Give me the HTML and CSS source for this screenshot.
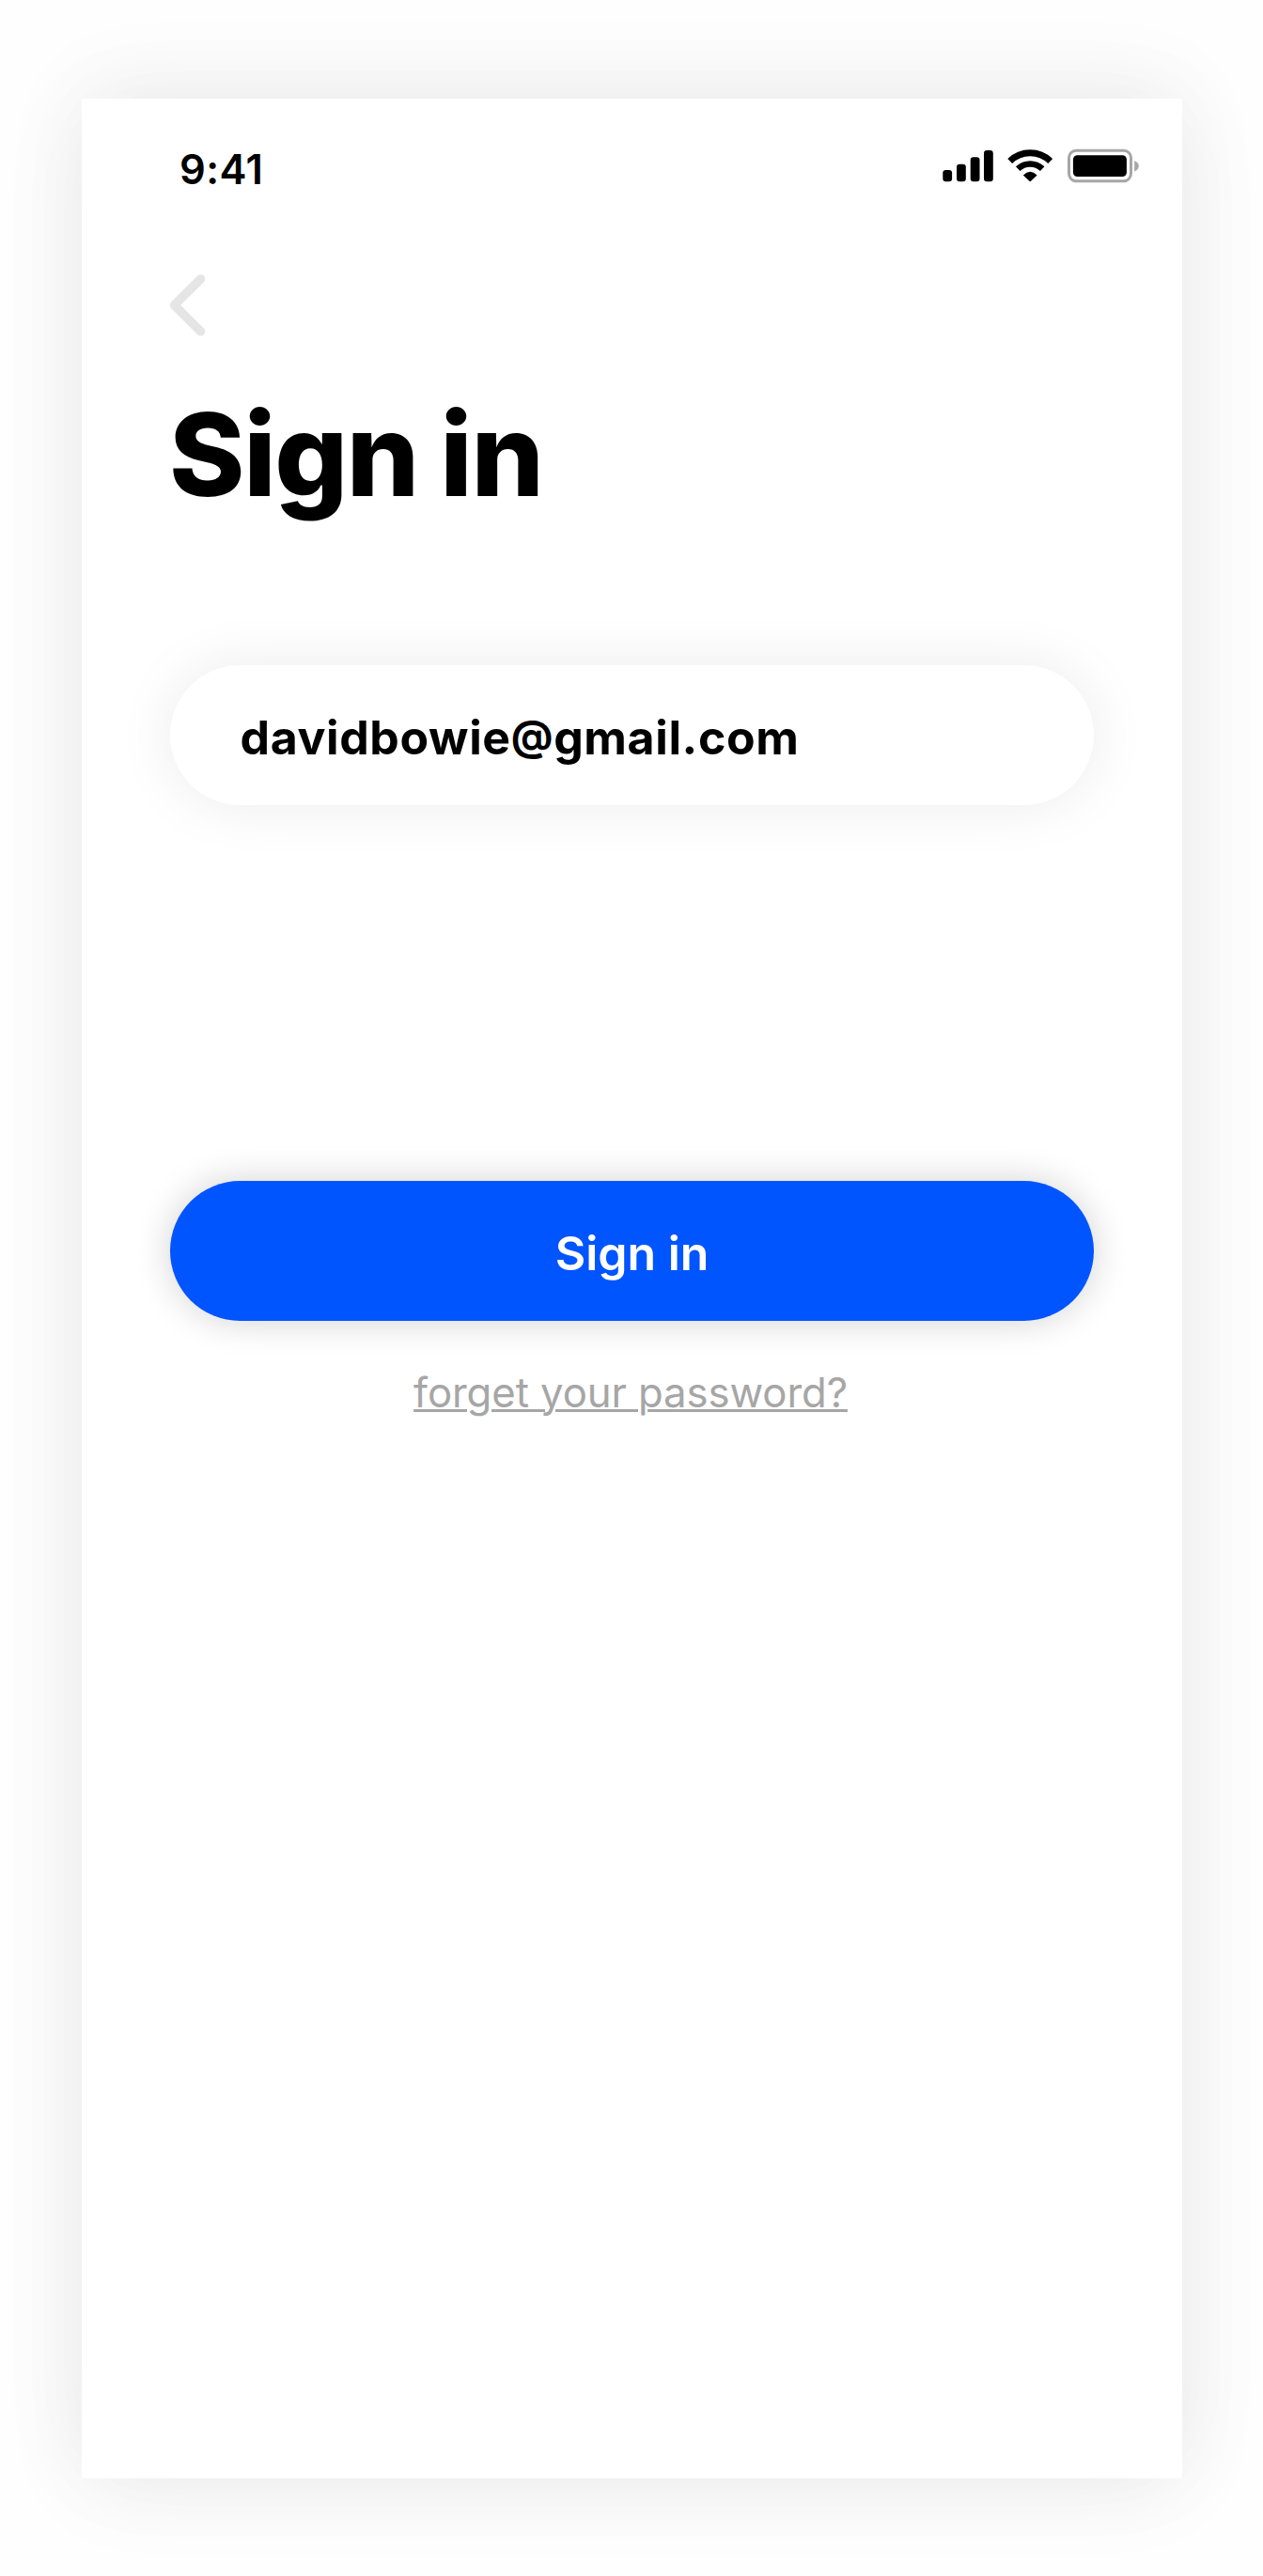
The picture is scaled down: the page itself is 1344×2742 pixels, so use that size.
FILE: index.html
```html
<!DOCTYPE html>
<html lang="en">
<head>
<meta charset="utf-8">
<title>Sign in</title>
<link rel="stylesheet" href="styles.css">
</head>
<body>
<main class="screen">
  <header class="status">
    <span class="time">9:41</span>
    <svg class="indicators" viewBox="0 0 210 40" width="210" height="40" aria-hidden="true">
      <g fill="#000">
        <rect x="0.3" y="23" width="9.8" height="12.3" rx="3.2"/>
        <rect x="15" y="16.7" width="9.8" height="18.6" rx="3.2"/>
        <rect x="29.7" y="9.3" width="9.8" height="26" rx="3.2"/>
        <rect x="44" y="2" width="9.8" height="33.3" rx="3.2"/>
      </g>
      <g fill="none" stroke="#000">
        <path d="M71.7 13.4A30.8 30.8 0 0 1 114.7 13.4" stroke-width="7"/>
        <path d="M80.2 21.6A19 19 0 0 1 106.2 21.6" stroke-width="6.6"/>
      </g>
      <path d="M85.8 28.4Q93.2 21.2 100.6 28.4L94 34.8Q93.2 35.6 92.4 34.8Z"/>
      <rect x="134.5" y="2.3" width="66" height="32.4" rx="7.6" fill="none" stroke="#a6a6a6" stroke-width="3"/>
      <rect x="138.9" y="7.2" width="57" height="22.8" rx="4.6"/>
      <path d="M204.2 12.9Q208.8 15 208.8 18.8T204.2 24.6Z" fill="#a6a6a6"/>
    </svg>
  </header>
  <svg class="back" viewBox="0 0 40 68" width="40" height="68" aria-label="Back"><path d="M32.6 5.9L4.5 33.9L32.6 61.9" fill="none" stroke="#e5e5e5" stroke-width="9.4" stroke-linecap="round" stroke-linejoin="round"/></svg>
  <h1 class="title">Sign in</h1>
  <div class="field">davidbowie<span class="at">@</span>gmail.com</div>
  <button class="submit">Sign in</button>
  <a class="forgot">forget your password?</a>
</main>
</body>
</html>
```
FILE: styles.css
```css
body {
  margin: 0;
  padding: 105px 86px 104px 87px;
  background: #fefefe;
  font-family: Inter, "Liberation Sans", sans-serif;
  color: #000;
}
.screen {
  box-sizing: border-box;
  height: 2533px;
  padding: 53px 94px 0;
  display: flex;
  flex-direction: column;
  background: #fff;
  box-shadow: 0 11px 94px rgba(0, 0, 0, .055), 0 -11px 94px rgba(0, 0, 0, .055);
}
.status {
  display: flex;
  justify-content: space-between;
  height: 52px;
  margin: 0 -49px 0 10px;
}
.time {
  font-size: 43.5px;
  font-weight: 600;
  line-height: 44px;
  letter-spacing: .4px;
  white-space: nowrap;
}
.indicators {
  flex: none;
}
.back {
  display: block;
  margin-top: 81px;
}
.title {
  margin: 50px 0 0 -1px;
  font-size: 122px;
  font-weight: 800;
  line-height: 150px;
  letter-spacing: -1.4px;
  word-spacing: -2px;
}
.field {
  box-sizing: border-box;
  height: 149.5px;
  margin-top: 148.5px;
  padding-left: 74.5px;
  border-radius: 75px;
  background: #fff;
  box-shadow: 0 0 62px rgba(0, 0, 0, .08);
  font-size: 50px;
  font-weight: 700;
  line-height: 154px;
  letter-spacing: .62px;
}
.at {
  font-size: 44px;
  line-height: 0;
  vertical-align: 4.5px;
}
.submit {
  height: 149.5px;
  margin-top: 399.5px;
  padding: 0;
  border: 0;
  border-radius: 75px;
  background: #0055ff;
  box-shadow: 0 0 38px rgba(0, 0, 0, .18);
  color: #fff;
  font: 600 50px/154px Inter, "Liberation Sans", sans-serif;
}
.forgot {
  margin: 50px 3px 0 0;
  align-self: center;
  color: #a6a6a6;
  font-size: 43.7px;
  line-height: 54px;
  letter-spacing: -.1px;
  text-decoration: underline;
  text-decoration-thickness: 3px;
}
```
